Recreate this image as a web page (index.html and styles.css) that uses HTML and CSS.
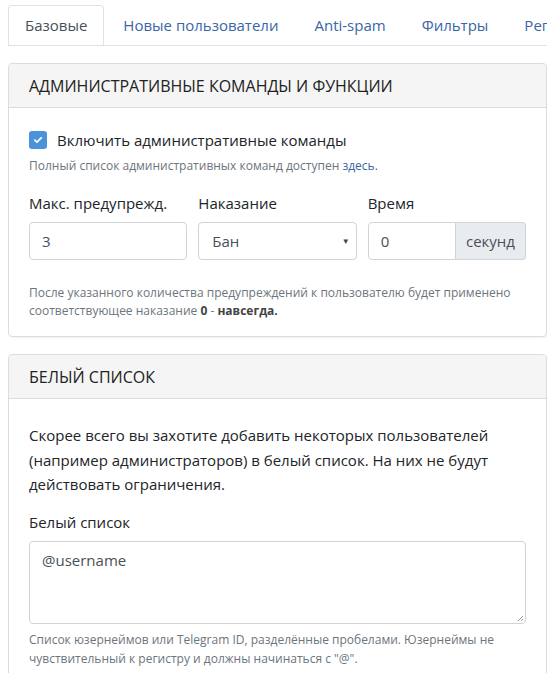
FILE: index.html
```html
<!DOCTYPE html>
<html lang="ru">
<head>
    <meta charset="UTF-8">
    <title>Настройки</title>
    <link rel="stylesheet" href="styles.css">
</head>
<body>
<ul class="tabs">
    <li class="tab active">Базовые</li>
    <li class="tab">Новые пользователи</li>
    <li class="tab">Anti-spam</li>
    <li class="tab">Фильтры</li>
    <li class="tab">Репутация</li>
</ul>

<div class="card">
    <div class="card-header">АДМИНИСТРАТИВНЫЕ КОМАНДЫ И ФУНКЦИИ</div>
    <div class="card-body">
        <label class="check">
            <span class="box">
                <svg width="10" height="10" viewBox="0 0 10 10"><path d="M1.8 5.2 L4 7.2 L8.2 2.8" fill="none" stroke="#fff" stroke-width="1.8" stroke-linecap="round" stroke-linejoin="round"/></svg>
            </span>
            Включить административные команды
        </label>
        <div class="hint">Полный список административных команд доступен <a href="#">здесь.</a></div>

        <div class="row3">
            <div class="field">
                <label>Макс. предупрежд.</label>
                <div class="input">3</div>
            </div>
            <div class="field">
                <label>Наказание</label>
                <div class="input select">Бан <span class="caret">▼</span></div>
            </div>
            <div class="field">
                <label>Время</label>
                <div class="group">
                    <div class="input">0</div>
                    <div class="addon">секунд</div>
                </div>
            </div>
        </div>
        <div class="hint help">После указанного количества предупреждений к пользователю будет применено соответствующее наказание <b>0</b> - <b>навсегда.</b></div>
    </div>
</div>

<div class="card">
    <div class="card-header">БЕЛЫЙ СПИСОК</div>
    <div class="card-body">
        <p class="lead">Скорее всего вы захотите добавить некоторых пользователей (например администраторов) в белый список. На них не будут действовать ограничения.</p>
        <label class="lbl">Белый список</label>
        <div class="textarea">@username
            <svg class="grip" width="8" height="8" viewBox="0 0 8 8"><path d="M7 2 L2 7 M7 5 L5 7" stroke="#999" stroke-width="1"/></svg>
        </div>
        <div class="hint help2">Список юзернеймов или Telegram ID, разделённые пробелами. Юзернеймы не чувствительный к регистру и должны начинаться с "@".</div>
    </div>
</div>
</body>
</html>
```

FILE: styles.css
```css
body{
    margin: 5px 8px 0 8px;
    font-family: "Open Sans", "Noto Sans", sans-serif;
    font-size: 15px;
    color: #212529;
    background: #fff;
    overflow: hidden;
}
.tabs{
    display: flex;
    list-style: none;
    margin: 0 -8px 0 0;
    padding: 0;
    border-bottom: 1px solid #dee2e6;
    white-space: nowrap;
    overflow: hidden;
}
.tab{
    padding: 0 16px;
    height: 39px;
    line-height: 39px;
    color: #3b66a6;
    border: 1px solid transparent;
    border-radius: 4px 4px 0 0;
    margin-bottom: -1px;
    margin-right: 2px;
}
.tab.active{
    color: #495057;
    border-color: #dee2e6 #dee2e6 #fff;
    background: #fff;
}
.card{
    margin-top: 17px;
    border: 1px solid #dcdcdc;
    border-radius: 4px;
    box-shadow: 1px 1px 2px rgba(0,0,0,0.06);
}
.card-header{
    background: #f5f5f5;
    border-bottom: 1px solid #dcdcdc;
    padding: 0 20px;
    height: 43px;
    line-height: 44px;
    font-size: 16px;
    color: #222;
    border-radius: 4px 4px 0 0;
}
.card-body{
    padding: 20px 20px 16px 20px;
}
.check{
    display: flex;
    align-items: center;
    gap: 10px;
    height: 24px;
}
.box{
    width: 18px;
    height: 18px;
    border-radius: 3px;
    background: #4a92d9;
    display: flex;
    align-items: center;
    justify-content: center;
}
.hint{
    font-size: 12px;
    color: #6c757d;
    margin-top: 5px;
}
.hint a{
    color: #3b66a6;
    text-decoration: none;
}
.hint b{
    color: #444;
    line-height: 1;
}
.row3{
    display: grid;
    grid-template-columns: 1fr 1fr 1fr;
    gap: 11px;
    margin-top: 18px;
}
.field label, .lbl{
    display: block;
    margin-bottom: 8px;
    line-height: 22px;
}
.input{
    height: 36px;
    line-height: 36px;
    border: 1px solid #ced4da;
    border-radius: 4px;
    padding: 0 12px;
    color: #495057;
    position: relative;
}
.select{
    padding-left: 13px;
}
.caret{
    position: absolute;
    right: 6px;
    top: 0;
    font-size: 8px;
    color: #444;
}
.group{
    display: flex;
}
.group .input{
    flex: 1;
    border-radius: 4px 0 0 4px;
    min-width: 0;
}
.addon{
    height: 36px;
    line-height: 36px;
    padding: 0 10px;
    background: #e9ecef;
    border: 1px solid #ced4da;
    border-left: none;
    border-radius: 0 4px 4px 0;
    color: #495057;
}
.help{
    margin-top: 24px;
    line-height: 18px;
}
.lead{
    margin: 4px 0 14px 0;
    line-height: 24.5px;
}
.textarea{
    box-sizing: border-box;
    height: 83px;
    border: 1px solid #ced4da;
    border-radius: 4px;
    padding: 8px 12px;
    color: #495057;
    position: relative;
    line-height: 20px;
}
.grip{
    position: absolute;
    right: 1px;
    bottom: 1px;
}
.help2{
    margin-top: 6px;
    line-height: 19px;
}
```
